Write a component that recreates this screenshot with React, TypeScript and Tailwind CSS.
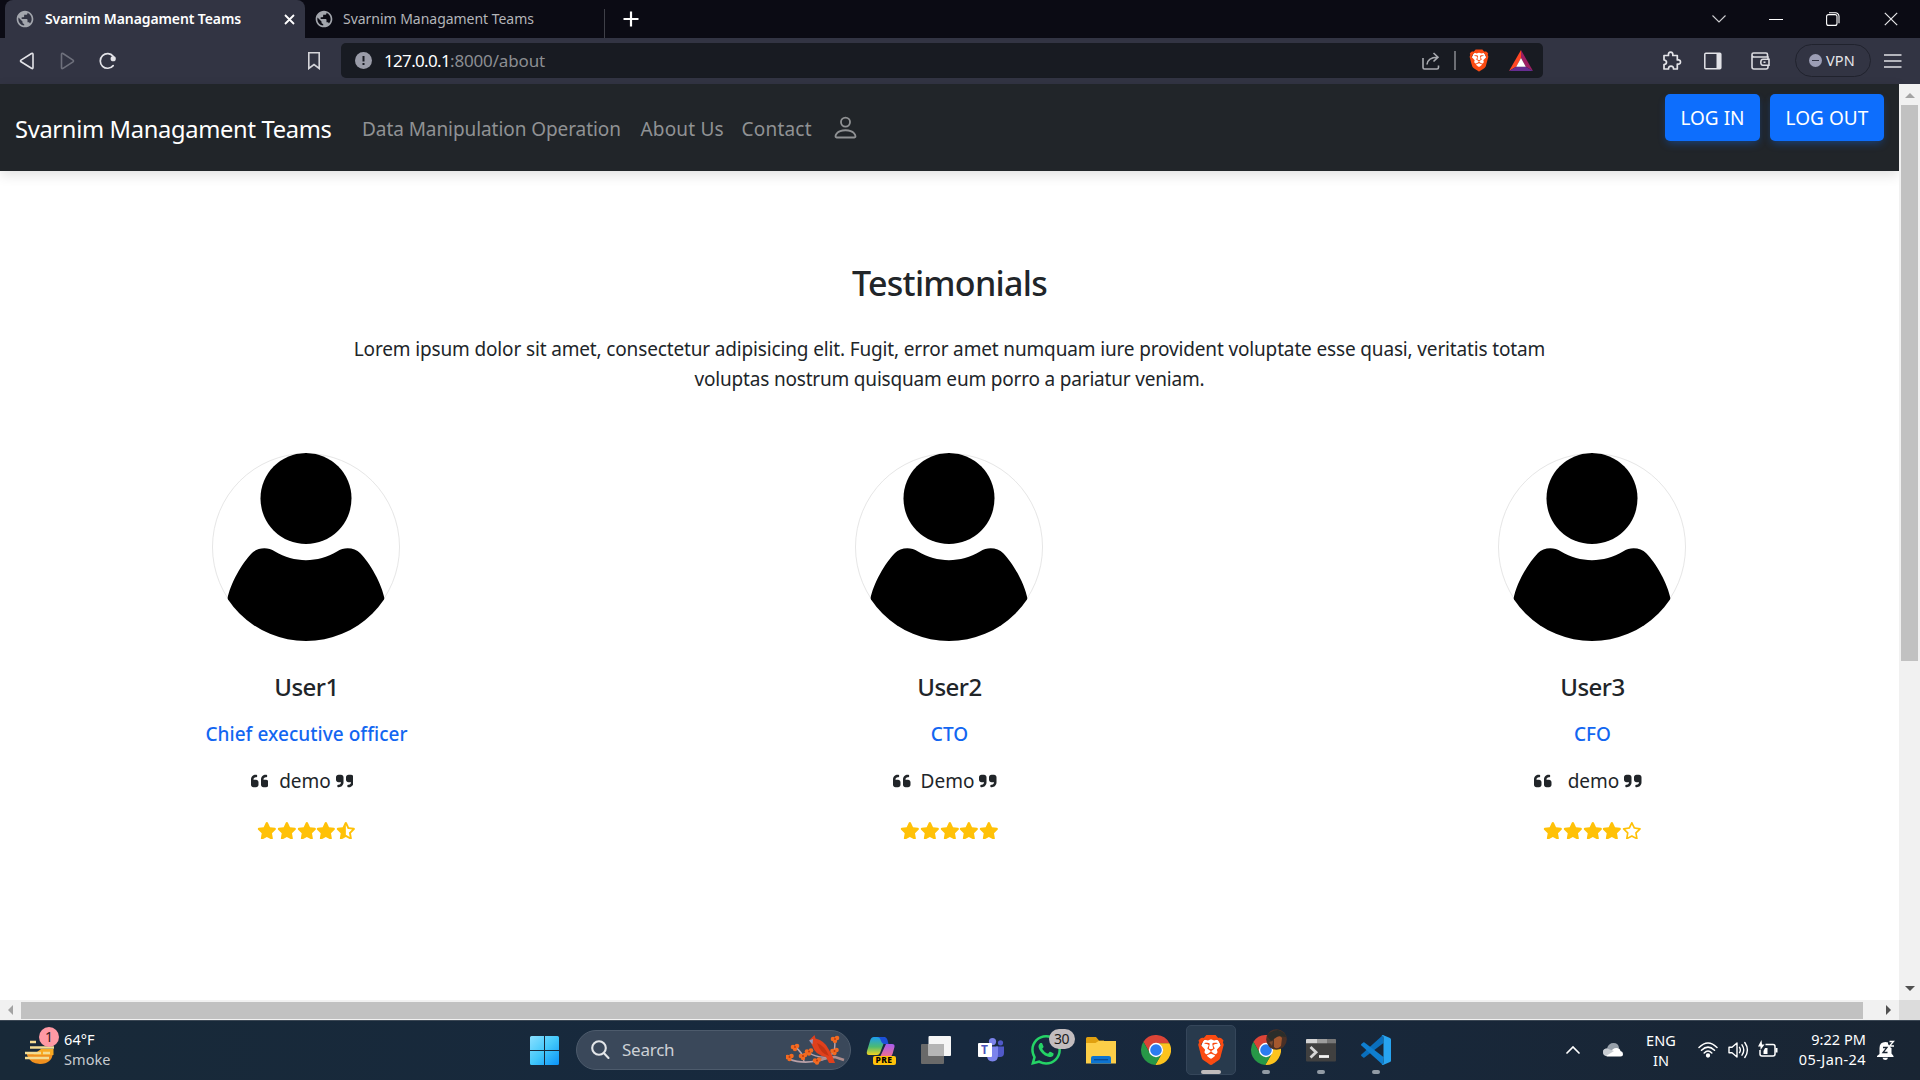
import React from "react";
import { FaQuoteLeft, FaQuoteRight, FaRegStar, FaStar, FaStarHalfStroke } from "react-icons/fa6";
import { SiBrave, SiWhatsapp } from "react-icons/si";
import { BsPerson } from "react-icons/bs";
import { MdPublic } from "react-icons/md";

function Tab({ active }: { active?: boolean }) {
  return active ? (
    <div className="ml-[5px] flex h-[38px] w-[300px] items-center rounded-t-lg bg-[#323443] pl-[10px] text-white">
      <MdPublic className="size-[20px] shrink-0 text-[#a3a6ad]" />
      <span className="ml-[10px] w-[229px] whitespace-nowrap pb-[2px] text-[14px] font-semibold tracking-[-0.1px]">Svarnim Managament Teams</span>
      <svg className="ml-[10px] size-[11px] shrink-0" viewBox="0 0 11 11" stroke="#fff" strokeWidth="1.8">
        <path d="M1 1l9 9M10 1l-9 9" />
      </svg>
    </div>
  ) : (
    <div className="flex h-[38px] w-[300px] items-center pl-[9px]">
      <MdPublic className="size-[20px] shrink-0 text-[#a3a6ad]" />
      <span className="ml-[9px] w-[261px] whitespace-nowrap pb-[2px] text-[14px] tracking-[-0.03px] text-[#b4b5b9]">Svarnim Managament Teams</span>
      <span className="mt-[9px] h-[29px] w-px shrink-0 bg-[#3f4048]" />
    </div>
  );
}

function TabBar() {
  return (
    <div className="flex h-[38px] shrink-0 items-center bg-[#0b0b14]">
      <Tab active />
      <Tab />
      <svg className="ml-[18px] size-[16px]" viewBox="0 0 16 16" stroke="#fff" strokeWidth="2.2">
        <path d="M8 .5v15M.5 8h15" />
      </svg>
      <div className="ml-auto flex items-center pr-[22px]">
        <svg width="14" height="8" viewBox="0 0 14 8" fill="none" stroke="#cfcfd2" strokeWidth="1.1">
          <path d="M.5 .5L7 7l6.500-6.500" />
        </svg>
        <span className="ml-[43px] h-px w-[14px] bg-white" />
        <svg className="ml-[43px]" width="14" height="14" viewBox="0 0 14 14" fill="none" stroke="#fff" strokeWidth="1.1">
          <rect x=".6" y="2.600" width="10.400" height="10.800" rx="2" />
          <path d="M3 .8h6.500a3.500 3.500 0 0 1 3.500 3.500v7" />
        </svg>
        <svg className="ml-[44px]" width="14" height="14" viewBox="0 0 14 14" stroke="#e8e8ea" strokeWidth="1.2">
          <path d="M.8.8l12.400 12.400M13.200.8L.8 13.200" />
        </svg>
      </div>
    </div>
  );
}

function Toolbar() {
  return (
    <div className="flex h-[46px] shrink-0 items-center bg-[#323443] pb-px">
      <svg className="ml-[19px]" width="16" height="18" viewBox="0 0 16 18" fill="none" stroke="#e3e3e8" strokeWidth="1.6" strokeLinejoin="round">
        <path d="M12.500 1.500Q14 .8 14 2.500V15.500Q14 17.200 12.500 16.300L2 9.800Q1 9 2 8.200Z" />
      </svg>
      <svg className="ml-[25px]" width="16" height="18" viewBox="0 0 16 18" fill="none" stroke="#6e707c" strokeWidth="1.6" strokeLinejoin="round">
        <path d="M3 1.500Q1.500.8 1.500 2.500V15.500Q1.500 17.200 3 16.300L13 9.800Q14 9 13 8.200Z" />
      </svg>
      <svg className="ml-[22px]" width="19" height="18" viewBox="0 0 19 18" fill="none">
        <path d="M15.200 4.300A7.300 7.300 0 1 0 15.200 13.600" stroke="#e3e3e8" strokeWidth="1.700" strokeLinecap="round" />
        <circle cx="15.200" cy="6.700" r="2.600" fill="#e3e3e8" />
      </svg>
      <svg className="ml-[191px]" width="12" height="18" viewBox="0 0 12 18" fill="none" stroke="#d5d5da" strokeWidth="1.6">
        <path d="M.8.8h10.400V16.500L6 12.600L.8 16.500Z" />
      </svg>
      <div className="ml-[21px] flex h-[35px] w-[1202px] items-center rounded-[5px] bg-[#181b22]">
        <span className="ml-[14px] flex size-[17px] items-center justify-center rounded-full bg-[#9a9ca8]">
          <svg width="3" height="9" viewBox="0 0 3 9" fill="#181b22">
            <rect x=".5" width="2" height="5.500" />
            <rect x=".5" y="7" width="2" height="2" />
          </svg>
        </span>
        <span className="ml-[12px] whitespace-nowrap text-[17px] tracking-[-0.67px] text-white">127.0.0.1</span>
        <span className="whitespace-nowrap text-[17px] tracking-[-0.15px] text-[#8c8e92]">:8000/about</span>
        <div className="ml-auto flex items-center pr-[10px]">
          <svg width="18" height="18" viewBox="0 0 18 18" fill="none" stroke="#a9abb0" strokeWidth="1.600">
            <path d="M1 6V15.500Q1 17 2.500 17H15Q16.500 17 16.500 15.500V13.500" />
            <path d="M5 12.500Q5.500 5.500 15.500 5.200M11.500 1L16 5.200L11.500 9.500" />
          </svg>
          <span className="ml-[14px] h-[19px] w-[2px] bg-[#6c6e74]" />
          <BraveLogo className="ml-[12px] h-[23px] w-[22px]" />
          <svg className="ml-[19px]" width="24" height="21" viewBox="0 0 24 21">
            <path d="M12 0L0 21L7.500 16.500L12 8Z" fill="#ff4724" />
            <path d="M12 0L24 21L16.500 16.500L12 8Z" fill="#9e1f63" />
            <path d="M0 21H24L16.500 16.500H7.500Z" fill="#662d91" />
            <path d="M12 8L16.800 16.700H7.200Z" fill="#fff" />
          </svg>
        </div>
      </div>
      <svg className="ml-[119px]" width="20" height="20" viewBox="0 0 20 20" fill="none" stroke="#e3e3e8" strokeWidth="1.700" strokeLinejoin="round">
        <path d="M2 4.500H6.500Q6 1.200 8.600 1.200T10.800 4.500H15.300V9Q18.500 8.400 18.500 11T15.300 13V18H11.500Q11.600 15.200 9 15.200T6.500 18H2V13.600Q4.500 13.400 4.500 11.300T2 9Z" />
      </svg>
      <svg className="ml-[22px]" width="18" height="18" viewBox="0 0 18 18" fill="none">
        <rect x=".8" y="1.300" width="16" height="15.400" rx="1" stroke="#e3e3e8" strokeWidth="1.500" />
        <path d="M12.500 1.300H16.800V16.700H12.500Z" fill="#e3e3e8" />
      </svg>
      <svg className="ml-[29px]" width="20" height="18" viewBox="0 0 20 18" fill="none" stroke="#dcdce1" strokeWidth="1.600">
        <path d="M16.500 5V2.500Q16.500 1 15 1H2.500Q1 1 1 2.500V15Q1 17 3 17H15Q17 17 17 15V13.500M1 3.500Q1.500 5 3 5H17V7.500" />
        <path d="M18 7.200H12Q9.800 7.200 9.800 10.300T12 13.200H18Z" />
        <path d="M12.500 10.200h2" />
      </svg>
      <div className="ml-[24px] flex h-[33px] w-[76px] items-center rounded-full border border-[#20222d] pl-[13px]">
        <span className="flex size-[13px] items-center justify-center rounded-full bg-[#9c9eb5]">
          <span className="h-[1.500px] w-[7px] bg-[#323443]" />
        </span>
        <span className="ml-[4px] text-[14.500px] tracking-[0.170px] text-[#e6e6ea]">VPN</span>
      </div>
      <svg className="ml-[13px] mt-px" width="18" height="14" viewBox="0 0 18 14" stroke="#e0e0e5" strokeWidth="1.600">
        <path d="M0 1h17.500M0 7h17.500M0 13h17.500" />
      </svg>
    </div>
  );
}

function BraveLogo({ className }: { className: string }) {
  return (
    <span className={"relative block shrink-0 " + className}>
      <svg className="absolute inset-0 size-full" viewBox="0 0 24 24">
        <path d="M12 2.500L6 4L4 9L7 19L12 22L17 19L20 9L18 4Z" fill="#fff" />
      </svg>
      <SiBrave className="absolute inset-0 size-full text-[#fb4b12]" />
    </span>
  );
}

function SiteNav() {
  return (
    <nav className="flex h-[87px] shrink-0 items-center bg-[#212529] text-[19px] text-[#909294] shadow-[0_4px_12px_rgba(0,0,0,0.12)]">
      <span className="ml-[15px] w-[347px] whitespace-nowrap pt-[4px] text-[23.700px] tracking-[-0.320px] text-white">Svarnim Managament Teams</span>
      <span className="w-[278.500px] whitespace-nowrap pt-[4px] tracking-[-0.070px]">Data Manipulation Operation</span>
      <span className="w-[101px] whitespace-nowrap pt-[4px] tracking-[0.170px]">About Us</span>
      <span className="w-[89px] pt-[4px] tracking-[0.220px]">Contact</span>
      <BsPerson className="size-[29px]" />
      <div className="ml-auto flex gap-[10px] self-start pr-[15px] pt-[10px] text-white">
        <button className="h-[47px] w-[95px] whitespace-nowrap rounded-[5px] bg-[#0d6efd] pt-[2px] shadow-[0_4px_9px_-2px_rgba(13,110,253,0.4)]">LOG IN</button>
        <button className="h-[47px] w-[114px] whitespace-nowrap rounded-[5px] bg-[#0d6efd] pt-[2px] tracking-[0.050px] shadow-[0_4px_9px_-2px_rgba(13,110,253,0.4)]">LOG OUT</button>
      </div>
    </nav>
  );
}

const people = [
  { name: "User1", role: "Chief executive officer", quote: "demo", gap: "ml-[11px]", rating: 4.5 },
  { name: "User2", role: "CTO", quote: "Demo", gap: "ml-[10px]", rating: 5 },
  { name: "User3", role: "CFO", quote: "demo", gap: "ml-[16px]", rating: 4 },
];

function Avatar() {
  return (
    <svg className="mr-px" width="188" height="188" viewBox="0 0 188 188">
      <circle cx="94" cy="94" r="93.500" fill="#fff" stroke="#e6e6e6" />
      <clipPath id="disc">
        <circle cx="94" cy="94" r="94" />
      </clipPath>
      <g clipPath="url(#disc)">
        <circle cx="94" cy="45.500" r="45.500" />
        <path d="M15.500 146C18 131 30 110 40 100C45 95 55 93 63 98.500C82 110 106 110 125 98.500C133 93 143 95 148 100C158 110 170 131 172.500 146V188H15.500Z" />
      </g>
    </svg>
  );
}

function Stars({ rating }: { rating: number }) {
  return (
    <div className="mt-[25px] flex h-[19px] items-center text-[#ffc107]">
      {[1, 2, 3, 4, 5].map((n) => {
        const Icon = rating >= n ? FaStar : rating > n - 1 ? FaStarHalfStroke : FaRegStar;
        return <Icon key={n} className="h-[17.500px] w-[19.700px]" />;
      })}
    </div>
  );
}

function Person({ p }: { p: (typeof people)[number] }) {
  return (
    <div className="flex w-[643px] flex-col items-center">
      <Avatar />
      <h5 className="mt-[31px] h-[30px] text-[24px] font-medium leading-[30px] tracking-[-0.500px]">{p.name}</h5>
      <h6 className="mt-[17px] h-[30px] text-[19px] font-medium leading-[30px] tracking-[0.040px] text-[#1266f1]">{p.role}</h6>
      <p className="mt-[17px] flex h-[30px] items-center pr-[9px] text-[19px] leading-[30px]">
        <FaQuoteLeft className="h-[20px] w-[17.500px]" />
        <span className={"tracking-[0.020px] " + p.gap}>{p.quote}</span>
        <FaQuoteRight className="ml-[5px] h-[20px] w-[17.500px]" />
      </p>
      <Stars rating={p.rating} />
    </div>
  );
}

function Page() {
  return (
    <div className="flex h-[936px] shrink-0">
      <div className="flex w-[1899px] flex-col">
        <div className="flex h-[916px] flex-col bg-white">
          <SiteNav />
          <main className="flex flex-col items-center overflow-hidden pt-[91px] text-[#212529]">
            <h3 className="text-[34px] font-medium leading-[42px] tracking-[-0.700px]">Testimonials</h3>
            <p className="mt-[30px] whitespace-nowrap text-center text-[19px] leading-[30px] tracking-[-0.150px]">
              Lorem ipsum dolor sit amet, consectetur adipisicing elit. Fugit, error amet numquam iure provident voluptate esse quasi, veritatis totam
              <br />
              <span className="tracking-[-0.190px]">voluptas nostrum quisquam eum porro a pariatur veniam.</span>
            </p>
            <div className="mt-[59px] flex w-[1929px] justify-center">
              {people.map((p) => (
                <Person key={p.name} p={p} />
              ))}
            </div>
          </main>
        </div>
        <div className="flex h-[20px] items-center bg-[#f1f1f1]">
          <svg className="ml-[8px]" width="5" height="10" viewBox="0 0 5 10" fill="#a3a3a3">
            <path d="M5 0V10L0 5Z" />
          </svg>
          <span className="ml-[8px] h-[17px] w-[1842px] bg-[#c1c1c1]" />
          <svg className="ml-[23px]" width="5" height="10" viewBox="0 0 5 10" fill="#505050">
            <path d="M0 0V10L5 5Z" />
          </svg>
        </div>
      </div>
      <div className="flex w-[21px] flex-col items-center bg-[#f1f1f1]">
        <svg className="mt-[9px] shrink-0" width="10" height="5" viewBox="0 0 10 5" fill="#a3a3a3">
          <path d="M0 5H10L5 0Z" />
        </svg>
        <span className="mt-[7px] h-[556px] w-[17px] bg-[#c1c1c1]" />
        <svg className="mt-auto mb-[9px] shrink-0" width="10" height="5" viewBox="0 0 10 5" fill="#505050">
          <path d="M0 0H10L5 5Z" />
        </svg>
        <span className="h-[20px] w-full bg-[#dcdcdc]" />
      </div>
    </div>
  );
}

function ChromeLogo() {
  return (
    <svg width="30" height="30" viewBox="2 2 44 44">
      <path d="M5.540 12.030A22 22 0 0 1 43.600 14H24A10 10 0 0 0 15.340 29Z" fill="#db4437" />
      <path d="M43.600 14A22 22 0 0 1 22.860 45.970L32.660 29A10 10 0 0 0 24 14Z" fill="#fcc31e" />
      <path d="M22.860 45.970A22 22 0 0 1 5.540 12.030L15.340 29A10 10 0 0 0 32.660 29Z" fill="#279847" />
      <circle cx="24" cy="24" r="10.500" fill="#fff" />
      <circle cx="24" cy="24" r="8.500" fill="#2a7cf0" />
    </svg>
  );
}

function Slot({ children, state }: { children: React.ReactNode; state?: "open" | "active" }) {
  return (
    <div className="flex w-[55px] justify-center">
      <div className={"relative flex h-[50px] w-[50px] items-center justify-center rounded-[5px] " + (state === "active" ? "border border-[#35465a] bg-[#283a4d]" : "")}>
        {children}
        {state === "open" && <span className="absolute bottom-px left-[21px] h-[4px] w-[8px] rounded-full bg-[#929ba5]" />}
        {state === "active" && <span className="absolute bottom-0 left-[14px] h-[4px] w-[20px] rounded-full bg-[#c0bcbc]" />}
      </div>
    </div>
  );
}

function Cardinal() {
  const blossoms = [
    [3.500, 22],
    [9, 12],
    [17, 21],
    [23, 16.500],
    [31, 25.500],
    [49, 4],
    [48.500, 16],
  ];
  return (
    <svg width="60" height="31" viewBox="0 0 60 31">
      <path d="M3 24Q15 29 31 26Q42 24 46 19Q50 14 48.500 5M9 12Q17 17 18 27M22 17Q30 23 42 22" fill="none" stroke="#b9a0a8" strokeWidth="1.500" />
      <path d="M28 27Q42 22 49 22L58 25" fill="none" stroke="#b08d8c" strokeWidth="2.600" />
      {blossoms.map(([x, y]) => (
        <g key={x} fill="#f26a21">
          <circle cx={x - 2} cy={y} r="2.300" />
          <circle cx={x + 2} cy={y - 1} r="2.300" />
          <circle cx={x} cy={y + 2} r="2.200" />
          <circle cx={x} cy={y} r="1" fill="#c73a08" />
        </g>
      ))}
      <path d="M23.500 5L28.500 0L29.500 3.500Q39 6 42.500 14L46 20L49 28H43L40 22Q29 20 26.500 11Z" fill="#e0401c" />
      <path d="M31 8Q39 11 43 21Q35 19 31 8Z" fill="#c23413" />
      <path d="M23 5.500L27 4L26.500 9.500Z" fill="#8c98c4" />
    </svg>
  );
}

function Taskbar() {
  return (
    <footer className="flex h-[60px] shrink-0 items-center border-t border-[#3b4754] bg-linear-to-r from-[#182938] via-[#17293f] to-[#192533] pb-px text-[14.500px] leading-[20px] text-white">
      <div className="relative ml-[25px] h-[40px] w-[39px] shrink-0">
        <svg className="absolute top-[7px] left-0" width="30" height="28" viewBox="0 0 30 28">
          <path d="M2 16H28Q27 26.500 15 27Q5 26.500 2 18Z" fill="#f0901e" />
          <path d="M16 12H28.500V18H8Z" fill="#f8a922" />
          <path d="M5 5h6M5 10.500h24M0 16h16M18 16h7M0 21h24" stroke="#f3dc92" strokeWidth="2.600" />
        </svg>
        <span className="absolute top-[-3px] left-[14px] flex size-[20px] items-center justify-center rounded-full bg-[#ff99a4] text-[14px] text-[#33191c]">1</span>
      </div>
      <div className="w-[466px] pb-[3px]">
        <p className="tracking-[0.100px]">64°F</p>
        <p className="tracking-[0.080px] text-[#c6cbd0]">Smoke</p>
      </div>
      <svg width="29" height="29" viewBox="0 0 29 29">
        <defs>
          <linearGradient id="win" gradientUnits="userSpaceOnUse" x1="0" y1="0" x2="29" y2="29">
            <stop stopColor="#8ae0ff" />
            <stop offset=".5" stopColor="#43c8fb" />
            <stop offset="1" stopColor="#0a92f8" />
          </linearGradient>
        </defs>
        <path d="M1.500 0H14V14H0V1.500Q0 0 1.500 0ZM15 0H27.500Q29 0 29 1.500V14H15ZM0 15H14V29H1.500Q0 29 0 27.500ZM15 15H29V27.500Q29 29 27.500 29H15Z" fill="url(#win)" />
      </svg>
      <div className="ml-[17px] flex h-[40px] w-[275px] items-center rounded-full border border-[#4d5b6c] bg-[#3a485a] pl-[14px]">
        <svg width="19" height="20" viewBox="0 0 19 20" fill="none" stroke="#e3e6e9" strokeWidth="2.100" strokeLinecap="round">
          <circle cx="8" cy="8" r="6.800" />
          <path d="M12.800 13L17.500 18" />
        </svg>
        <span className="ml-[12px] text-[17px] tracking-[-0.250px] text-[#cdd1d6]">Search</span>
        <span className="ml-auto mr-[4px]">
          <Cardinal />
        </span>
      </div>
      <div className="ml-[2px] flex">
        <Slot>
          <div className="relative">
            <svg width="30" height="29" viewBox="0 0 30 29">
              <defs>
                <linearGradient id="cpa" x1="0" y1="0" x2="0" y2="1">
                  <stop stopColor="#1c9df0" />
                  <stop offset=".55" stopColor="#4dbb70" />
                  <stop offset="1" stopColor="#f4d420" />
                </linearGradient>
                <linearGradient id="cpb" x1="0" y1="0" x2="0" y2="1">
                  <stop stopColor="#a65cf0" />
                  <stop offset="1" stopColor="#f3708c" />
                </linearGradient>
              </defs>
              <path d="M8 1H18Q20 1 19 4L14 17Q13 19 11 19H3Q0 19 1 15L4 5Q5 1 8 1Z" fill="url(#cpa)" />
              <path d="M11 1H18Q20.500 1 21.500 4L22.500 8H18Q16 8 15 5Q14 1 11 1Z" fill="#1c50d8" />
              <path d="M20 8H26Q29 8 28.500 11L26.500 18Q25.500 21 23 21H14Z" fill="url(#cpb)" />
            </svg>
            <span className="absolute bottom-0 left-[7px] flex h-[9px] w-[23px] items-center justify-center rounded-[2px] bg-[#ffc20a] text-[8.500px] font-extrabold leading-none tracking-[0.500px] text-black">PRE</span>
          </div>
        </Slot>
        <Slot>
          <svg width="30" height="28" viewBox="0 0 30 28">
            <rect y="8" width="23" height="20" rx="1" fill="#696969" />
            <rect x="7.500" width="22.500" height="20" rx="1" fill="#f6f6f6" />
            <rect x="7.500" y="8" width="15.500" height="12" fill="#b5b5b5" />
          </svg>
        </Slot>
        <Slot>
          <div className="relative">
            <svg width="26" height="24" viewBox="0 0 26 24">
              <circle cx="22.500" cy="4.800" r="2.600" fill="#5059c9" />
              <path d="M18 8.500H26V15Q26 19 22 19H18Z" fill="#5059c9" />
              <circle cx="14.500" cy="3.600" r="3.600" fill="#7b83eb" />
              <path d="M9 8.500H20V17Q20 23.500 14.500 23.500T9 17Z" fill="#7b83eb" />
            </svg>
            <span className="absolute top-[5px] left-0 flex size-[14px] items-center justify-center rounded-[1px] bg-white text-[12px] font-bold leading-none text-[#4b53bc]">T</span>
          </div>
        </Slot>
        <Slot>
          <SiWhatsapp className="size-[30px] text-[#25d366]" />
          <span className="absolute top-[4px] left-[28px] flex h-[20px] w-[26px] items-center justify-center rounded-full bg-[#c2bcbe] text-[14px] tracking-[-0.500px] text-[#1a1a1a]">30</span>
        </Slot>
        <Slot>
          <svg width="30" height="27" viewBox="0 0 30 27">
            <path d="M1.500 0H10L13 3.500H18V10H0V1.500Q0 0 1.500 0Z" fill="#e0a010" />
            <path d="M0 6H9.500L12.500 4H30V26.500H0Z" fill="#fcce48" />
            <path d="M5 26.500V21Q5 19 7 19H23Q25 19 25 21V26.500Z" fill="#0d74d1" />
            <path d="M8 22.700H22" stroke="#0a4a94" strokeWidth="1.300" />
          </svg>
        </Slot>
        <Slot>
          <ChromeLogo />
        </Slot>
        <Slot state="active">
          <BraveLogo className="size-[30px]" />
        </Slot>
        <Slot state="open">
          <ChromeLogo />
          <svg className="absolute top-[4px] left-[25px]" width="21" height="21" viewBox="0 0 21 21">
            <circle cx="10.500" cy="10.500" r="10.300" fill="#4a3026" />
            <path d="M1 7Q5 1 12 1Q19 3 20 8L12 7L5 12Z" fill="#2a2d2a" />
            <path d="M8 10Q14 5 16 9L15 17Q11 21 8 18Z" fill="#a5582e" />
            <path d="M3 13L7 12L6 17Z" fill="#7a4a30" />
          </svg>
        </Slot>
        <Slot state="open">
          <svg width="30" height="23" viewBox="0 0 30 23">
            <rect width="30" height="22.500" rx="1" fill="#404040" />
            <path d="M0 4.300V1Q0 0 1 0H11V4.300Z" fill="#d4d4d4" />
            <path d="M11 0H21V4.300H11Z" fill="#9d9d9d" />
            <path d="M21 0H29Q30 0 30 1V4.300H21Z" fill="#777" />
            <path d="M4.500 8L10 13.200L4.500 18.400" fill="none" stroke="#d6d6d6" strokeWidth="2.800" />
            <path d="M13 17.500H23" stroke="#f2f2f2" strokeWidth="2.800" />
          </svg>
        </Slot>
        <Slot state="open">
          <svg width="30" height="30" viewBox="0 0 30 30">
            <path d="M22 0L22.500 8L3.500 22.500Q2.800 23 2.200 22.500L.4 20.900Q-.3 20.200 .4 19.500Z" fill="#0a6fbd" />
            <path d="M22 30L22.500 22L3.500 7.500Q2.800 7 2.200 7.500L.4 9.100Q-.3 9.800 .4 10.500Z" fill="#0f7fd0" />
            <path d="M22 0L29 3Q30 3.500 30 4.500V25.500Q30 26.500 29 27L22 30Q21 30 20.500 29Q22.500 30 22.500 27V3Q22.500 0 20.500 1Q21 0 22 0Z" fill="#27a3f0" />
          </svg>
        </Slot>
      </div>
      <div className="ml-auto flex items-center pr-[25px]">
        <svg width="14" height="8" viewBox="0 0 14 8" fill="none" stroke="#fff" strokeWidth="1.700" strokeLinecap="round">
          <path d="M1 7L7 1L13 7" />
        </svg>
        <svg className="ml-[23px]" width="20" height="14" viewBox="0 0 20 14">
          <path d="M4 13Q0 12.500 0 9T4 5.500Q5.500 0 10.500 0T16 5L8 11Z" fill="#97a0aa" />
          <path d="M4 13.500Q2 12.500 3 10T8 8.500Q10 4.800 13.500 5T17.500 8Q20 8.500 20 11T17.500 13.500Z" fill="#fff" />
          <path d="M0 9Q0 5.500 4 5.500L11 8L3 13Q0 12.500 0 9Z" fill="#c8cdd2" />
        </svg>
        <div className="ml-[22px] w-[32px] text-center tracking-[0.120px]">
          <p>ENG</p>
          <p>IN</p>
        </div>
        <svg className="ml-[21px]" width="20" height="16" viewBox="0 0 20 16" fill="none" stroke="#fff" strokeWidth="1.500" strokeLinecap="round">
          <path d="M1 5.500Q10-3.500 19 5.500M3.500 8.300Q10 2 16.500 8.300M6.200 11Q10 7.200 13.800 11" />
          <circle cx="10" cy="13.500" r="1.400" fill="#fff" />
        </svg>
        <svg className="ml-[10px]" width="21" height="18" viewBox="0 0 21 18" fill="none" stroke="#fff" strokeWidth="1.400" strokeLinecap="round" strokeLinejoin="round">
          <path d="M1 6.300H4L9 2V16L4 11.700H1Z" />
          <path d="M11.500 6.300Q13.200 9 11.500 11.700M14 3.800Q17.500 9 14 14.200M16.800 1.500Q22 9 16.800 16.500" />
        </svg>
        <svg className="ml-[9px] mb-[3px]" width="21" height="18" viewBox="0 0 21 18" fill="none" stroke="#fff" strokeWidth="1.500">
          <path d="M7.500 4.500H15Q17 4.500 17 6.500V14Q17 16 15 16H4Q2 16 2 14V10" />
          <path d="M18.500 8V12.500" strokeWidth="2" />
          <path d="M5.500 14V11L7 8H9.500V14Z" fill="#fff" stroke="none" />
          <path d="M3.500 0L0 6.500H2.500V10L6.500 4.500H4Z" fill="#fff" stroke="none" />
        </svg>
        <div className="ml-[19px] w-[68px] whitespace-nowrap pb-[3px] text-right">
          <p className="tracking-[0.050px]">9:22 PM</p>
          <p className="tracking-[0.400px]">05-Jan-24</p>
        </div>
        <svg className="ml-[11px]" width="18" height="20" viewBox="0 0 18 20">
          <path d="M2.500 14V8Q2.500 2 8.500 2T14.500 8V13.500L16.500 16V17H0V16Z" fill="#fff" />
          <path d="M5.500 17.800H11Q10.500 20 8.300 20T5.500 17.800Z" fill="#fff" />
          <path d="M6 7.500H10L6 12.500H10.500" fill="none" stroke="#192533" strokeWidth="1.300" />
          <path d="M11 0H18V8H14L11 4Z" fill="#192533" />
          <path d="M12.500 1.500H16.500L12.500 6H17" fill="none" stroke="#fff" strokeWidth="1.300" />
        </svg>
      </div>
    </footer>
  );
}

export default function App() {
  return (
    <div className="flex h-[1080px] w-[1920px] flex-col overflow-hidden bg-white font-['Noto_Sans','Open_Sans',sans-serif]">
      <TabBar />
      <Toolbar />
      <Page />
      <Taskbar />
    </div>
  );
}
